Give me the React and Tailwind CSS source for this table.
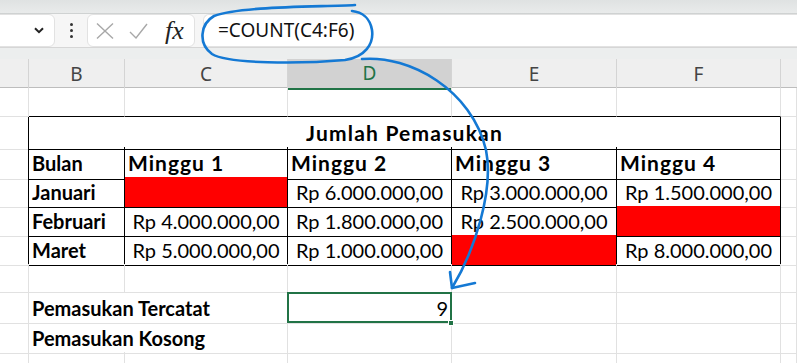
import React from "react";

const cols = "grid grid-cols-[29px_96px_163px_164px_165px_164px_1fr]";
const cellFont = { fontFamily: "Lato, 'Liberation Sans', sans-serif" };

const Cell = ({ className = "", children }) => (
  <div
    className={`h-full flex items-center whitespace-nowrap border-b border-r border-[#e1e1e1] text-[20px] text-black ${className}`}
    style={cellFont}
  >
    {children}
  </div>
);

// black-bordered cell used inside the income table
const T = ({ className = "", children }) => (
  <Cell className={`!border-black ${className}`}>{children}</Cell>
);

const Money = ({ value }) => (
  <T className="justify-center">Rp {value}</T>
);

const Red = () => <T className="bg-[#ff0000]" />;

const Week = ({ n }) => (
  <T className="pl-[3px] font-bold text-[21px] tracking-[1px]">Minggu {n}</T>
);

const ColHead = ({ label, active }) => (
  <div
    className={`h-full flex items-center justify-center border-r border-[#d4d4d4] text-[19px] ${
      active ? "bg-[#d2d2d2] text-[#217346] border-b-2 border-b-[#217346]" : "text-[#444]"
    }`}
    style={{ fontFamily: "'Noto Sans', sans-serif" }}
  >
    {label}
  </div>
);

const FormulaBar = () => (
  <div className="relative h-[59px] bg-[#eceeee]">
    <div className="h-[14px] bg-gradient-to-b from-[#dfe2e2] to-[#e9ebeb] border-b border-[#cfd2d2]" />
    <div className="flex items-center h-[34px] bg-[#f6f6f6] border-b border-[#d6d6d6]">
      {/* name box */}
      <div className="h-[33px] w-[65px] -ml-[10px] bg-white rounded-md border border-[#e2e2e2] flex items-center justify-end pr-[10px]">
        <svg width="10" height="7" viewBox="0 0 10 7">
          <path d="M1 1.2 L5 5.2 L9 1.2" fill="none" stroke="#222" strokeWidth="2" />
        </svg>
      </div>
      <div className="w-[32px] flex flex-col items-center gap-[3px]">
        <span className="w-[3px] h-[3px] bg-[#333] rounded-full" />
        <span className="w-[3px] h-[3px] bg-[#333] rounded-full" />
        <span className="w-[3px] h-[3px] bg-[#333] rounded-full" />
      </div>
      {/* cancel / enter / insert function */}
      <div className="h-[33px] w-[108px] bg-white rounded-md border border-[#e2e2e2] flex items-center">
        <svg width="18" height="16" viewBox="0 0 18 16" className="ml-[8px]">
          <path d="M1 0.5 L17 15.5 M17 0.5 L1 15.5" stroke="#a8a8a8" strokeWidth="1.4" />
        </svg>
        <svg width="19" height="16" viewBox="0 0 19 16" className="ml-[15px]">
          <path d="M1 9 L7 15 L18 1" fill="none" stroke="#a8a8a8" strokeWidth="1.4" />
        </svg>
        <span
          className="ml-[17px] text-[26px] italic text-[#222] leading-none"
          style={{ fontFamily: "'Liberation Serif', serif" }}
        >
          fx
        </span>
      </div>
      <div
        className="ml-[8px] flex-1 h-[33px] bg-white rounded-l-md border border-r-0 border-[#e2e2e2] flex items-center pl-[14px] text-[19px] text-[#111]"
        style={{ fontFamily: "'Noto Sans', sans-serif" }}
      >
        =COUNT(C4:F6)
      </div>
    </div>
  </div>
);

const App = () => {
  return (
    <div className="relative w-[797px] h-[363px] overflow-hidden bg-white">
      <FormulaBar />

      <div className={`${cols} h-[29px] bg-[#efefef] border-b border-[#bdbdbd]`}>
        <ColHead label="" />
        <ColHead label="B" />
        <ColHead label="C" />
        <ColHead label="D" active />
        <ColHead label="E" />
        <ColHead label="F" />
        <div />
      </div>

      <div className={`${cols} h-[29px]`}>
        <Cell />
        <Cell className="!border-b-black" />
        <Cell className="!border-b-black" />
        <Cell className="!border-b-black" />
        <Cell className="!border-b-black" />
        <Cell className="!border-b-black" />
        <Cell />
      </div>

      <div className={`${cols} h-[30px]`}>
        <Cell className="!border-r-black" />
        <T className="col-span-5 justify-center font-bold text-[21px] tracking-[1.2px]">Jumlah Pemasukan</T>
        <Cell />
      </div>

      <div className={`${cols} h-[30px]`}>
        <Cell className="!border-r-black" />
        <T className="pl-[3px] font-bold">Bulan</T>
        <Week n={1} />
        <Week n={2} />
        <Week n={3} />
        <Week n={4} />
        <Cell />
      </div>

      <div className={`${cols} h-[29px]`}>
        <Cell className="!border-r-black" />
        <T className="pl-[3px] font-bold">Januari</T>
        <Red />
        <Money value="6.000.000,00" />
        <Money value="3.000.000,00" />
        <Money value="1.500.000,00" />
        <Cell />
      </div>

      <div className={`${cols} h-[29px]`}>
        <Cell className="!border-r-black" />
        <T className="pl-[3px] font-bold">Februari</T>
        <Money value="4.000.000,00" />
        <Money value="1.800.000,00" />
        <Money value="2.500.000,00" />
        <Red />
        <Cell />
      </div>

      <div className={`${cols} h-[29px]`}>
        <Cell className="!border-r-black" />
        <T className="pl-[3px] font-bold">Maret</T>
        <Money value="5.000.000,00" />
        <Money value="1.000.000,00" />
        <Red />
        <Money value="8.000.000,00" />
        <Cell />
      </div>

      <div className={`${cols} h-[29px]`}>
        <Cell />
        <Cell />
        <Cell />
        <Cell />
        <Cell />
        <Cell />
        <Cell />
      </div>

      <div className={`${cols} h-[30px]`}>
        <Cell />
        <Cell className="!border-r-0 pl-[3px] font-bold overflow-visible">Pemasukan Tercatat</Cell>
        <Cell />
        <Cell className="relative justify-end pr-[3px]">
          9
          {/* active cell frame and fill handle */}
          <div className="absolute -left-[1px] -top-[1px] w-[165px] h-[31px] border-2 border-[#217346]" />
          <div className="absolute -right-[3px] -bottom-[3px] w-[6px] h-[6px] bg-[#217346] border border-white" />
        </Cell>
        <Cell />
        <Cell />
        <Cell />
      </div>

      <div className={`${cols} h-[29px]`}>
        <Cell />
        <Cell className="!border-r-0 pl-[3px] font-bold overflow-visible">Pemasukan Kosong</Cell>
        <Cell />
        <Cell />
        <Cell />
        <Cell />
        <Cell />
      </div>

      <div className={`${cols} h-[29px]`}>
        <Cell />
        <Cell />
        <Cell />
        <Cell />
        <Cell />
        <Cell />
        <Cell />
      </div>

      {/* hand-drawn highlight around the formula and arrow to the result */}
      <svg className="absolute inset-0 pointer-events-none" width="797" height="363" viewBox="0 0 797 363">
        <g fill="none" stroke="#1479d4" strokeWidth="2.6" strokeLinecap="round" strokeLinejoin="round">
          <path d="M355 5 C 320 7, 240 6, 214 16 C 200 24, 198 44, 212 54 C 228 64, 300 64, 345 60 C 365 57, 374 44, 372 30 C 370 18, 362 12, 352 11" />
          <path d="M362 59 C 410 55, 472 90, 486 150 C 494 190, 475 250, 452 288" />
          <path d="M450 272 L452 288 L475 283" />
        </g>
      </svg>
    </div>
  );
};

export default App;
